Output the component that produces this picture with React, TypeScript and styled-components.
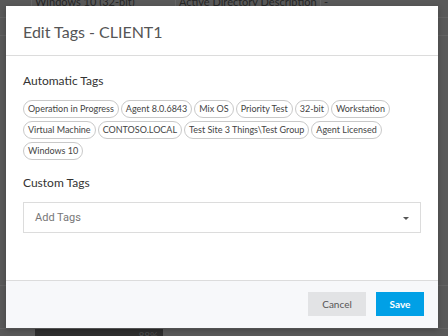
import styled, { createGlobalStyle } from "styled-components"

const GlobalStyle = createGlobalStyle`
    html, body {
        margin: 0;
        padding: 0;
        width: 448px;
        height: 336px;
        overflow: hidden;
        background: #595959;
        font-family: Lato, "Open Sans", sans-serif;
    }
`

const Page = styled.div`
    position: relative;
    width: 448px;
    height: 336px;
    overflow: hidden;
    background: #595959;
`

const BackTable = styled.div`
    display: flex;
    flex-direction: column;
`

const BackRow = styled.div<{ $h: number }>`
    display: grid;
    grid-template-columns: 32px 144px 145px 1fr;
    height: ${(p) => p.$h}px;
    border-bottom: 1px solid #636363;
    box-sizing: border-box;
`

const BackCell = styled.div`
    border-right: 1px solid #666;
    padding: 0 3px;
    font-size: 11px;
    line-height: 12px;
    color: #262626;
    white-space: nowrap;
    overflow: hidden;
    margin-top: -4px;
    &:last-child {
        border-right: none;
    }
`

const BottomBar = styled.div`
    display: flex;
    justify-content: flex-end;
    margin-left: 35px;
    width: 128px;
    height: 12px;
    background: #2e2e2e;
    color: #4d4d4d;
    font-size: 10px;
    padding-right: 5px;
    box-sizing: border-box;
`

const Modal = styled.div`
    position: absolute;
    left: 6px;
    top: 6px;
    width: 432px;
    height: 322px;
    background: #fff;
    display: flex;
    flex-direction: column;
    box-shadow: 0 2px 6px rgba(0, 0, 0, 0.25);
`

const Header = styled.div`
    height: 49px;
    border-bottom: 1px solid #dcdcdc;
    display: flex;
    align-items: center;
    padding: 0 17px;
    h2 {
        margin: 0;
        margin-top: 2px;
        font-weight: 400;
        font-size: 16px;
        color: #555;
    }
`

const Body = styled.div`
    flex: 1;
    padding: 17px 17px 0;
`

const SectionLabel = styled.div<{ $mt?: number }>`
    font-size: 12px;
    line-height: 15px;
    color: #333;
    margin-top: ${(p) => p.$mt ?? 0}px;
`

const TagList = styled.div`
    display: flex;
    flex-wrap: wrap;
    gap: 3px 2px;
    margin-top: 12px;
`

const Tag = styled.span`
    height: 18px;
    box-sizing: border-box;
    border: 1px solid #c9c9c9;
    border-radius: 9px;
    padding: 0 4px;
    font-size: 9px;
    line-height: 16px;
    color: #444;
    white-space: nowrap;
`

const Select = styled.div`
    margin-top: 12px;
    height: 31px;
    border: 1px solid #dcdcdc;
    box-sizing: border-box;
    display: flex;
    align-items: center;
    justify-content: space-between;
    padding: 0 11px 0 11px;
    span {
        font-family: Roboto, "Liberation Sans", sans-serif;
        font-size: 11px;
        color: #777;
    }
`

const Caret = styled.i`
    width: 0;
    height: 0;
    border-left: 3px solid transparent;
    border-right: 3px solid transparent;
    border-top: 3px solid #555;
    margin-top: 2px;
`

const Footer = styled.div`
    height: 48px;
    box-sizing: border-box;
    border-top: 1px solid #dcdcdc;
    background: #f7f8fa;
    display: flex;
    justify-content: flex-end;
    align-items: flex-start;
    gap: 10px;
    padding: 11px 14px 0 0;
`

const Button = styled.button<{ $primary?: boolean; $w: number }>`
    width: ${(p) => p.$w}px;
    height: 24px;
    border: none;
    border-radius: 0;
    font-family: Lato, sans-serif;
    font-size: 10px;
    font-weight: ${(p) => (p.$primary ? 700 : 400)};
    color: ${(p) => (p.$primary ? "#fff" : "#555")};
    background: ${(p) => (p.$primary ? "#00a0e6" : "#e2e3e5")};
    padding: 0;
    cursor: pointer;
`

const autoTags = [
    "Operation in Progress",
    "Agent 8.0.6843",
    "Mix OS",
    "Priority Test",
    "32-bit",
    "Workstation",
    "Virtual Machine",
    "CONTOSO.LOCAL",
    "Test Site 3 Things\\Test Group",
    "Agent Licensed",
    "Windows 10",
]

const App = () => {
    return (
        <Page>
            <GlobalStyle />
            <BackTable>
                <BackRow $h={18}>
                    <BackCell />
                    <BackCell>Windows 10 (32-bit)</BackCell>
                    <BackCell>Active Directory Description</BackCell>
                    <BackCell>-</BackCell>
                </BackRow>
                <BackRow $h={18}><BackCell /><BackCell /><BackCell /><BackCell /></BackRow>
                <BackRow $h={250}><BackCell /><BackCell /><BackCell /><BackCell /></BackRow>
                <BackRow $h={43}><BackCell /><BackCell /><BackCell /><BackCell /></BackRow>
                <BottomBar>88%</BottomBar>
            </BackTable>

            <Modal>
                <Header>
                    <h2>Edit Tags - CLIENT1</h2>
                </Header>
                <Body>
                    <SectionLabel>Automatic Tags</SectionLabel>
                    <TagList>
                        {autoTags.map((tag) => (
                            <Tag key={tag}>{tag}</Tag>
                        ))}
                    </TagList>
                    <SectionLabel $mt={15}>Custom Tags</SectionLabel>
                    <Select>
                        <span>Add Tags</span>
                        <Caret />
                    </Select>
                </Body>
                <Footer>
                    <Button $w={58}>Cancel</Button>
                    <Button $w={48} $primary>Save</Button>
                </Footer>
            </Modal>
        </Page>
    )
}

export default App
